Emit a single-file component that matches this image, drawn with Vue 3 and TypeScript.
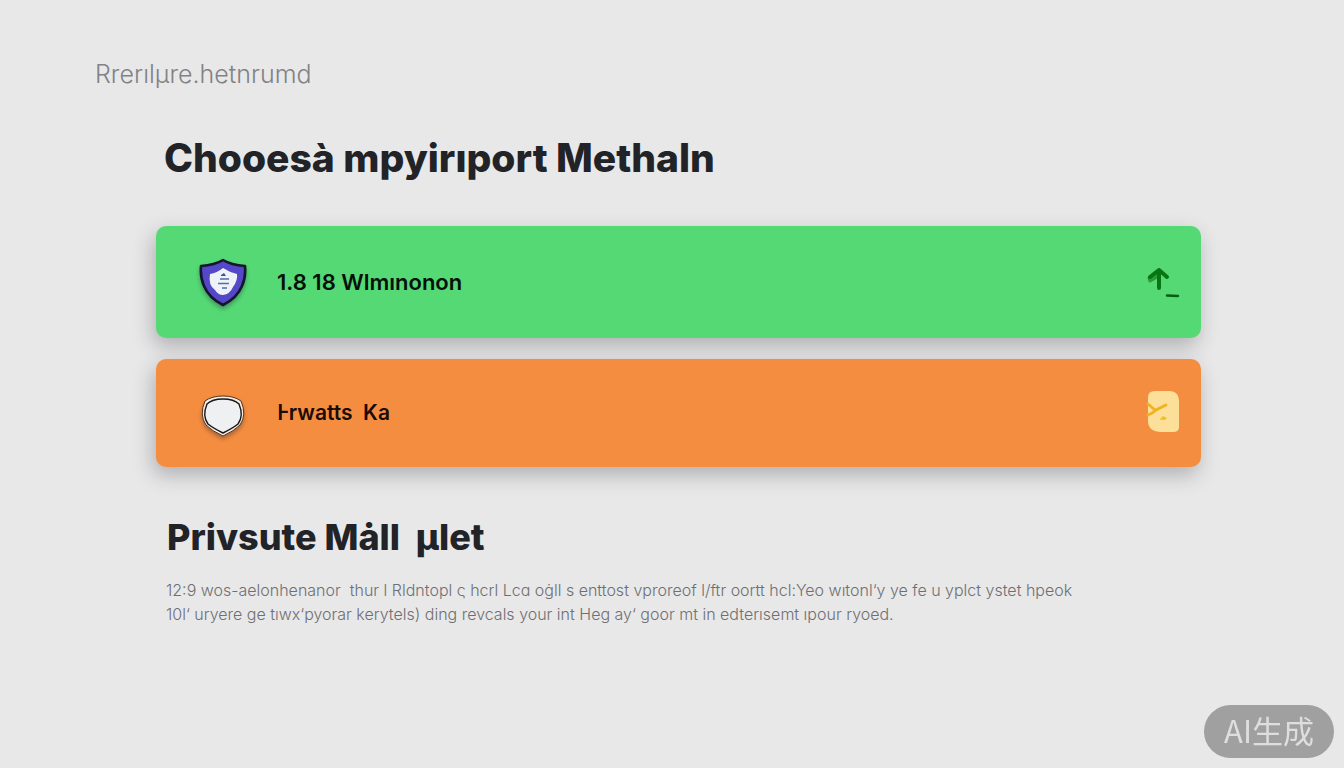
<script setup lang="ts">
interface Method {
  id: 'green' | 'orange'
  label: string
}

const methods: Method[] = [
  { id: 'green', label: '1.8 18 Wlmınonon' },
  { id: 'orange', label: 'Ⱶrwatts  Ka' },
]

const lines: string[] = [
  '12:9 wos-aelonhenanor  thur l Rldntopl ς hcrl Lcɑ oġll s enttost vproreof l/ftr oortt hcl:Yeo wıtonl‘y ye fe u yplct ystet hpeok',
  '10l‘ uryere ge tıwx‘pyorar kerytels) ding revcals your int Heg ay‘ goor mt in edterısemt ıpour ryoed.',
]
</script>

<template>
  <main class="page">
    <p class="brand">Rrerılµre.hetnrumd</p>
    <section class="content">
      <h1>Chooesà mpyirıport Methaln</h1>
      <div class="methods">
        <button v-for="m in methods" :key="m.id" type="button" class="card" :class="m.id">
          <svg v-if="m.id === 'green'" class="shield" viewBox="0 0 56 56" aria-hidden="true">
            <path d="M28 6Q20 11 6 12Q5 23 9 32Q14 44 28 51Q42 44 47 32Q51 23 50 12Q36 11 28 6Z" fill="#5548c8" stroke="#14152f" stroke-width="2.6" stroke-linejoin="round" />
            <path d="M28 14Q22 19 15 20Q13 31 20 36Q23 41 28 41Q35 40 38 33Q43 26 42 20Q34 18 28 14Z" fill="#eef2f8" />
            <path d="M26 21l3-2 2 3h-5z" fill="#355b91" />
            <path d="M25 25h9M23 29.500h11M27 34h5" fill="none" stroke="#4f6fa5" stroke-width="1.3" />
          </svg>
          <svg v-else class="shield" viewBox="0 0 56 56" aria-hidden="true">
            <path d="M28 11Q17 11 10 16Q4 30 11 40Q17 46 28 51Q39 46 45 40Q52 30 46 16Q39 11 28 11Z" fill="#f5efe7" stroke="#5b321a" stroke-width="1" />
            <path d="M28 14Q17 14 12 19Q7 31 13 39Q18 43 28 48Q38 43 43 39Q49 31 44 19Q39 14 28 14Z" fill="#eff0f1" stroke="#171717" stroke-width="1.4" />
          </svg>
          <span class="label">{{ m.label }}</span>
          <svg v-if="m.id === 'green'" class="action" viewBox="0 0 36 44" aria-hidden="true">
            <path d="M4 18l9-7 1 5-9 5z" fill="#2d9c38" stroke="#2d9c38" stroke-width="3" stroke-linejoin="round" />
            <path d="M14 28V10M5 17l9-7 8 7" fill="none" stroke="#087513" stroke-width="4" stroke-linecap="round" stroke-linejoin="round" />
            <path d="M22 35.500L33 36" stroke="#075d0f" stroke-width="2.400" stroke-linecap="round" />
          </svg>
          <svg v-else class="action" viewBox="0 0 36 44" aria-hidden="true">
            <path d="M10 0H24Q34 0 34 11V36Q34 41 28 41H15Q3 40 3 30V6Q3 0 10 0Z" fill="#fce09a" />
            <path d="M3 13l7 6M3 24q5-2 8-5l10-5" fill="none" stroke="#efb321" stroke-width="2.800" stroke-linecap="round" />
            <path d="M15 28l3-3 4 2-2 2h-4z" fill="#f0c326" />
          </svg>
        </button>
      </div>
      <h2>Privsute Mȧll&nbsp; µlet</h2>
      <p class="description"><span v-for="line in lines" :key="line">{{ line }}</span></p>
    </section>
    <div class="badge">AI生成</div>
  </main>
</template>

<style>
body {
  margin: 0;
  background: #e8e8e9;
}
</style>

<style scoped>
.page {
  box-sizing: border-box;
  min-height: 100vh;
  padding: 58px 143px 32px 156px;
  background: #e8e8e9;
  color: #222326;
  font-family: Inter, "Noto Sans", sans-serif;
}
.brand {
  margin: 0 0 0 -61px;
  color: #828284;
  font-size: 25px;
  font-weight: 300;
  line-height: 32px;
}
h1, h2 {
  margin: 0;
  font-weight: 800;
  line-height: 48px;
}
h1 {
  padding: 44px 8px;
  font-size: 39px;
}
.methods {
  display: flex;
  flex-direction: column;
  gap: 21px;
}
.card {
  display: flex;
  align-items: center;
  width: 100%;
  padding: 26px 20px 26px 39px;
  border: 0;
  border-radius: 10px;
  box-shadow: -3px 8px 20px rgb(60 60 65 / 32%);
  color: #07100a;
  font-family: inherit;
  text-align: left;
  cursor: pointer;
}
.green {
  min-height: 112px;
  background: #55d975;
}
.orange {
  min-height: 108px;
  background: #f58d40;
  color: #1a0b05;
}
.shield {
  width: 56px;
  height: 56px;
  flex: none;
  filter: drop-shadow(0 3px 2px rgb(30 30 40 / 35%));
}
.label {
  flex: 1;
  padding-left: 26px;
  font-size: 22px;
  font-weight: 600;
  line-height: 32px;
  white-space: pre-wrap;
}
.orange .label {
  font-size: 21px;
}
.action {
  width: 36px;
  height: 44px;
  flex: none;
}
h2 {
  padding: 46px 11px 17px;
  font-size: 36px;
}
.description {
  margin: 0;
  padding: 0 10px;
  color: #6f6f72;
  font-size: 16px;
  font-weight: 300;
  line-height: 24px;
}
.description span {
  display: block;
  white-space: pre-wrap;
}
.badge {
  position: fixed;
  right: 10px;
  bottom: 10px;
  padding: 5px 20px 8px;
  border-radius: 27px;
  background: #a0a0a0;
  color: #dedede;
  font-family: "Noto Sans CJK SC", sans-serif;
  font-size: 31px;
  line-height: 40px;
}
</style>
